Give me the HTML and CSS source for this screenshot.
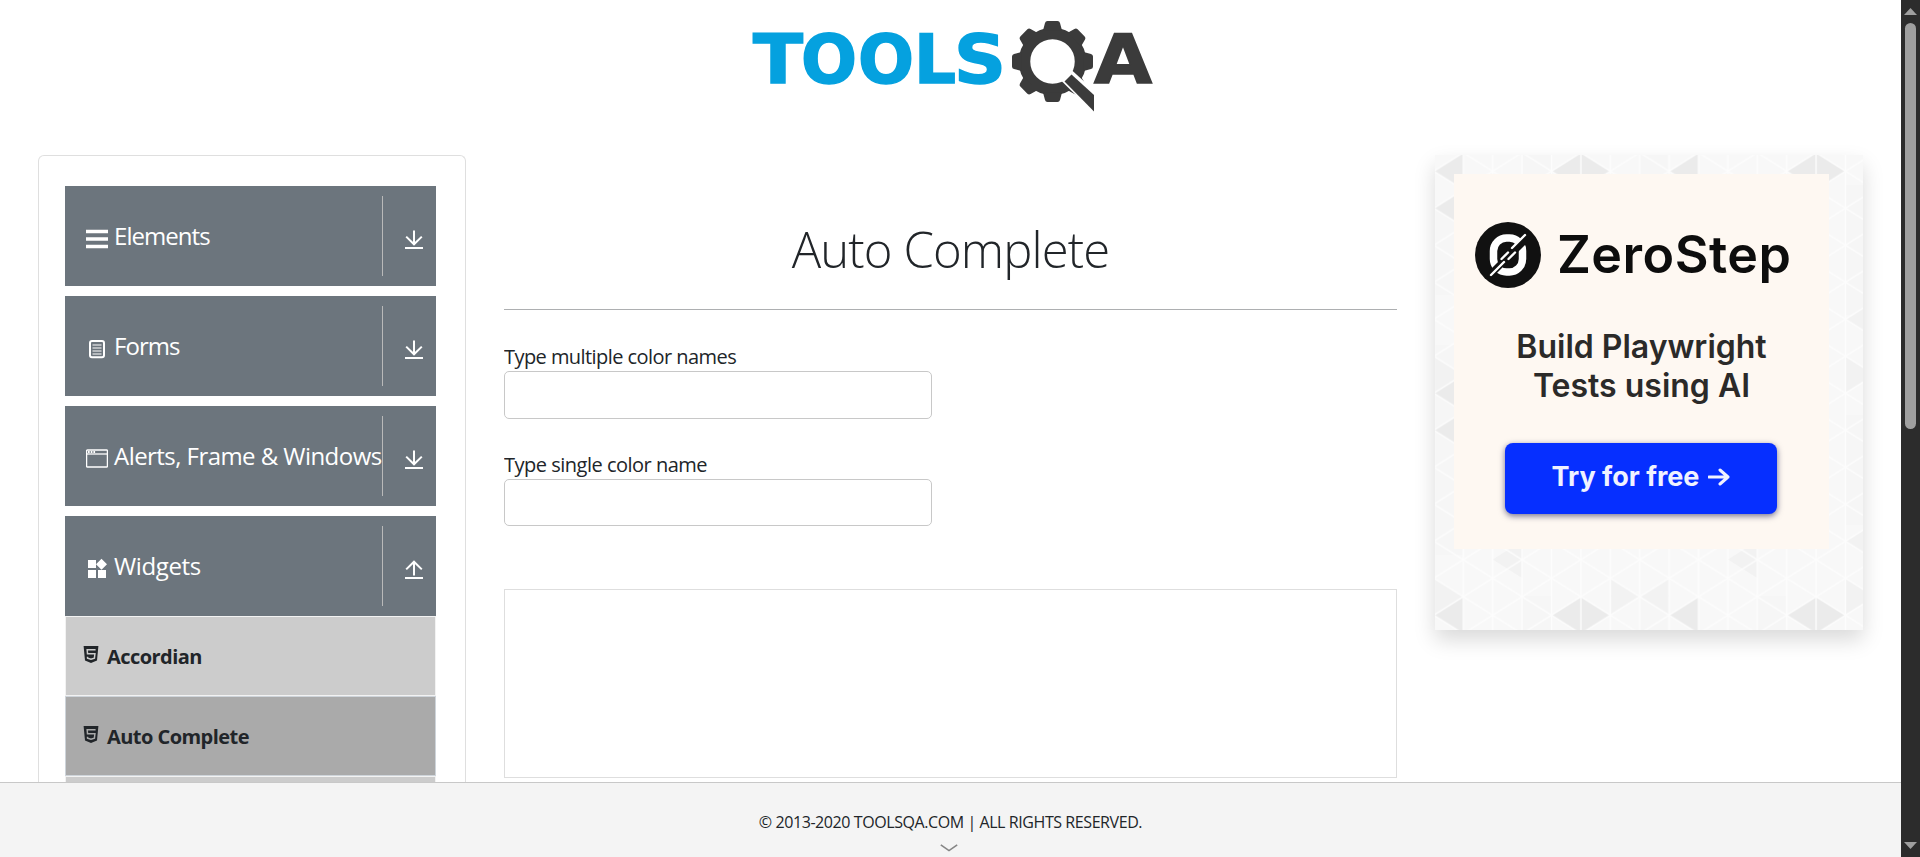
FILE: index.html
```html
<!DOCTYPE html>
<html lang="en">
<head>
<meta charset="utf-8">
<title>ToolsQA - Auto Complete</title>
<link rel="stylesheet" href="styles.css">
</head>
<body>
<svg class="defs" width="0" height="0">
  <symbol id="down" viewBox="0 0 18 20"><path d="M9 0.5V14M1.2 6.6 9 14.3 16.8 6.6" fill="none" stroke="#fff" stroke-width="2"/><path d="M0 17h18v2H0z" fill="#fff"/></symbol>
  <symbol id="up" viewBox="0 0 18 20"><path d="M9 15.5V2M1.2 9.4 9 1.7 16.8 9.4" fill="none" stroke="#fff" stroke-width="2"/><path d="M0 17h18v2H0z" fill="#fff"/></symbol>
  <symbol id="html5" viewBox="0 0 16 18"><path d="M.6 0h14.8L14 14.6 8 17 2 14.6z" fill="#212529"/><path d="M12.6 3.800H4.200L4.500 7.800h7.400l-.5 4.300L8 13.300l-3.400-1.200-.1-1.400" fill="none" stroke="currentColor" stroke-width="1.500"/></symbol>
</svg>
<div class="window">
  <div class="page">
    <header class="header">
      <svg class="logo" width="402" height="94" viewBox="0 0 402 94">
        <g class="logo-blue">
          <text x="1" y="65.500" textLength="50" lengthAdjust="spacingAndGlyphs">T</text>
          <text x="49" y="65.500" textLength="56" lengthAdjust="spacingAndGlyphs">O</text>
          <text x="106" y="65.500" textLength="56" lengthAdjust="spacingAndGlyphs">O</text>
          <text x="162" y="65.500" textLength="42" lengthAdjust="spacingAndGlyphs">L</text>
          <text x="202" y="65.500" textLength="52" lengthAdjust="spacingAndGlyphs">S</text>
        </g>
        <g transform="translate(300.5 44.500)" fill="#3b3b3b">
          <circle r="28" fill="none" stroke="#3b3b3b" stroke-width="11.5"/>
          <path id="tooth" d="M-9.5-31-7.500-38.500Q-7-40.500-5-40.500H5Q7-40.500 7.500-38.500L9.500-31z"/>
          <use href="#tooth" transform="rotate(45)"/><use href="#tooth" transform="rotate(90)"/><use href="#tooth" transform="rotate(135)"/>
          <use href="#tooth" transform="rotate(180)"/><use href="#tooth" transform="rotate(225)"/><use href="#tooth" transform="rotate(270)"/><use href="#tooth" transform="rotate(315)"/>
          <path d="M8 18.500 18.500 8 46 33V56z" fill="#fff"/>
          <path d="M12 20 19 13 41.500 33.500V50z"/>
        </g>
        <text class="logo-a" x="342" y="65.500" textLength="58" lengthAdjust="spacingAndGlyphs">A</text>
      </svg>
    </header>
    <div class="columns">
      <nav class="sidebar">
        <div class="group"><div class="group-name"><svg class="icon" width="22" height="22" viewBox="0 0 22 22"><path d="M0 3.500h22M0 11h22M0 18.500h22" stroke="#fff" stroke-width="3.600"/></svg><span class="t-elements">Elements</span></div><div class="toggle"><svg width="18" height="20"><use href="#down"/></svg></div></div>
        <div class="group"><div class="group-name"><svg class="icon" width="22" height="22" viewBox="0 0 22 22"><rect x="4" y="3" width="14" height="16.300" rx="2" fill="none" stroke="#fff" stroke-width="2"/><path d="M6.500 7h9M6.500 10h9M6.500 13h9M6.500 16h9" stroke="#fff" stroke-width="1.100"/></svg><span class="t-forms">Forms</span></div><div class="toggle"><svg width="18" height="20"><use href="#down"/></svg></div></div>
        <div class="group"><div class="group-name"><svg class="icon" width="22" height="22" viewBox="0 0 22 22"><rect x=".6" y="2" width="20.800" height="17" rx=".8" fill="none" stroke="#fff" stroke-width="1.300"/><path d="M1 6h20" stroke="#fff" stroke-width="1.300"/><path d="M2 4h8" stroke="#fff" stroke-width="1.800" stroke-dasharray="1.700 1"/></svg><span class="t-alerts">Alerts, Frame &amp; Windows</span></div><div class="toggle"><svg width="18" height="20"><use href="#down"/></svg></div></div>
        <div class="group open"><div class="group-name"><svg class="icon" width="22" height="22" viewBox="0 0 22 22"><path d="M2 2h8v8H2zM2 12h8v8H2zM12 12h8v8h-8zM15.500 .8 21 6.300l-5.500 5.500L10 6.300z" fill="#fff"/></svg><span class="t-widgets">Widgets</span></div><div class="toggle"><svg width="18" height="20"><use href="#up"/></svg></div></div>
        <ul class="menu">
          <li class="item"><svg width="16" height="18"><use href="#html5"/></svg><span>Accordian</span></li>
          <li class="item active"><svg width="16" height="18"><use href="#html5"/></svg><span>Auto Complete</span></li>
          <li class="item"></li>
        </ul>
      </nav>
      <main class="content">
        <h1 class="title"><span>Auto Complete</span></h1>
        <label class="label first" for="multi"><span>Type multiple color names</span></label>
        <input class="field" id="multi">
        <label class="label second" for="single"><span>Type single color name</span></label>
        <input class="field short" id="single">
        <div class="frame"></div>
      </main>
      <aside class="promo">
        <svg class="texture" width="428" height="475" viewBox="0 0 428 475">
          <defs><pattern id="mesh" x="28.300" y="-2.300" width="58.800" height="37" patternUnits="userSpaceOnUse">
            <path d="M0 0v37M29.400 0v37M58.800 0v37M0 0l58.800 37M0 37 58.800 0" fill="none" stroke="#fdfdfd" stroke-width="1.300"/>
          </pattern></defs>
          <rect width="428" height="475" fill="#f8f8f8"/>
          <g fill="#f6f6f6">
            <path d="M0 50h28v90H0zM0 190h28v210H0zM204.700 0h29.400v34h-29.400zM87 0h29.400v34H87zM322 441h29v34h-29zM87 441h29v34H87zM204.700 441h29.400v34h-29.400zM410 30h18v130h-18zM410 260h18v110h-18z"/>
          </g>
          <g fill="#f2f2f2">
            <path d="M-1.100 423v37l29.400-18.500zM175.300 423v37l29.400-18.500zM234.100 423v37l-29.400-18.500zM410.400 423v37l29.400-18.500zM439.800 368v37l-29.400-18.500zM410.400 201v37l29.400-18.500zM439.800 146v37l-29.400-18.500zM-1.100 201v37l29.400-18.500zM87.100 386v37l-29.400-18.500zM322.300 386v37l-29.400-18.500z"/>
          </g>
          <g fill="#ebebeb">
            <path d="M28.300 441.700v37l-29.400-18.500zM145.900 441.700v37l-29.400-18.500zM145.900 441.700v37l29.400-18.500zM263.500 441.700v37l-29.400-18.500zM381.100 441.700v37l-29.400-18.500zM381.100 441.700v37l29.400-18.500zM28.300-2.300v37l-29.400-18.500zM145.900-2.300v37l-29.400-18.500zM145.900-2.300v37l29.400-18.500zM263.500-2.300v37l-29.400-18.500zM381.100-2.300v37l-29.400-18.500zM381.100-2.300v37l29.400-18.500zM28.300 34.700v37l-29.400-18.500zM28.300 219.700v37l-29.400-18.500zM28.300 256.700v37l-29.400-18.500z"/>
          </g>
          <rect width="428" height="475" fill="url(#mesh)"/>
        </svg>
        <div class="ad">
          <div class="brand">
            <svg width="66" height="68" viewBox="0 0 66 68">
              <circle cx="33" cy="34" r="33" fill="#111"/>
              <rect x="18.500" y="17" width="29" height="34" rx="13" fill="none" stroke="#fff" stroke-width="7.500"/>
              <path d="M16 53 51 18" stroke="#111" stroke-width="7"/>
              <path d="M16 54 29 41M26.500 38 33 31.500M33.500 38 40 31.500M37 27 50 14" stroke="#fff" stroke-width="2.400" stroke-linecap="round"/>
            </svg>
            <span>ZeroStep</span>
          </div>
          <div class="pitch"><span>Build Playwright</span><span>Tests using AI</span></div>
          <div class="cta"><span>Try for free</span><svg width="22" height="18" viewBox="0 0 22 18"><path d="M1 9h19M12 2l8 7-8 7" fill="none" stroke="#f0f2ff" stroke-width="3" stroke-linejoin="round" stroke-linecap="round"/></svg></div>
        </div>
      </aside>
    </div>
    <footer class="footer">
      <span class="copyright">© 2013-2020 TOOLSQA.COM | ALL RIGHTS RESERVED.</span>
      <svg class="chevron" width="18" height="8" viewBox="0 0 18 8"><path d="M.8.8 9 6.600 17.200.8" fill="none" stroke="#858585" stroke-width="1.600"/></svg>
    </footer>
  </div>
  <div class="scrollbar">
    <svg width="13" height="7" viewBox="0 0 13 7"><path d="M0 7 6.500 0 13 7z" fill="#9f9f9f"/></svg>
    <div class="thumb"></div>
    <svg width="13" height="7" viewBox="0 0 13 7"><path d="M0 0h13L6.500 7z" fill="#9f9f9f"/></svg>
  </div>
</div>
</body>
</html>
```
FILE: styles.css
```css
* { box-sizing: border-box; }
html, body { margin: 0; height: 857px; overflow: hidden; }
body { background: #fff; color: #212529; font-family: "Open Sans", "Noto Sans", sans-serif; }
span { white-space: nowrap; }
.defs { display: block; }
svg { flex: none; }
.window { display: flex; height: 857px; }
.page { display: flex; flex-direction: column; width: 1901px; height: 857px; }

.header { display: flex; justify-content: center; height: 155px; flex: none; padding: 17px 0 0 5px; }
.logo { display: block; overflow: visible; }
.logo text { font-family: "DejaVu Sans", sans-serif; font-weight: 700; font-size: 67px; stroke-width: 1.5px; stroke-linejoin: miter; }
.logo-blue { fill: #05a1df; stroke: #05a1df; }
.logo .logo-a { fill: #3b3b3b; stroke: #3b3b3b; }

.columns { display: flex; align-items: flex-start; gap: 38px; height: 627px; padding-left: 38px; flex: none; }
.sidebar { width: 428px; height: 627px; border: 1px solid #dfdfdf; border-bottom: 0; border-radius: 6px 6px 0 0; padding: 30px 29px 0 26px; overflow: hidden; }
.group { display: flex; align-items: center; height: 100px; margin-bottom: 10px; background: #6c757d; color: #fff; }
.group.open { margin-bottom: 0; }
.group-name { display: flex; align-items: center; gap: 6px; width: 318px; height: 80px; padding: 0 0 1px 21px; border-right: 1px solid #b9b9b9; font-size: 24px; line-height: 34px; }
.t-elements { letter-spacing: -.95px; }
.t-forms { letter-spacing: -.95px; }
.t-alerts { letter-spacing: -.55px; }
.t-widgets { letter-spacing: -.38px; }
.icon { position: relative; top: 3px; }
.toggle { display: flex; justify-content: center; width: 53px; padding: 7px 0 0 8px; }
.menu { list-style: none; margin: 0; padding: 0; }
.item { display: flex; align-items: center; gap: 8px; height: 80px; padding: 0 0 2px 17px; border: 1px solid #f2f2f2; background: #ccc; background-clip: padding-box; color: #ccc; font-weight: 700; font-size: 20px; }
.item.active { background: #aaa; border-color: #ced4da; color: #aaa; }
.item span { color: #212529; letter-spacing: -.55px; padding-top: 3px; }

.content { width: 893px; height: 627px; padding-top: 63px; overflow: hidden; }
.title { height: 92px; margin: 0; text-align: center; border-bottom: 1px solid #adafb1; font-weight: 300; font-size: 49px; line-height: 63px; letter-spacing: -.9px; }
.label { display: block; height: 30px; font-size: 20px; line-height: 32px; letter-spacing: -.56px; }
.first { margin-top: 31px; }
.second { margin-top: 30px; letter-spacing: -.5px; }
.field { display: block; width: 428px; height: 48px; border: 1px solid #c8c8c8; border-radius: 5px; background: #fff; }
.field.short { height: 47px; }
.frame { height: 189px; margin-top: 63px; border: 1px solid #dedede; }

.promo { display: grid; width: 428px; height: 475px; box-shadow: 0 10px 20px rgba(0, 0, 0, .15); }
.texture, .ad { grid-area: 1 / 1; }
.ad { width: 375px; height: 375px; margin: 19px 0 0 19px; padding-top: 47px; background: #fef8f2; font-family: Inter, sans-serif; display: flex; flex-direction: column; }
.brand { display: flex; align-items: center; gap: 16px; height: 68px; padding-left: 21px; color: #0d0d0d; font-weight: 600; font-size: 52px; line-height: 68px; letter-spacing: .45px; }
.pitch { display: flex; flex-direction: column; align-items: center; margin-top: 38px; color: #2b2a29; font-weight: 600; font-size: 32px; line-height: 39px; }
.cta { display: flex; align-items: center; justify-content: center; gap: 9px; width: 272px; height: 71px; margin: 38px 0 0 51px; padding-bottom: 4px; border-radius: 8px; background: #062fff; color: #f0f2ff; box-shadow: 0 2px 6px rgba(0, 0, 60, .55); font-weight: 700; font-size: 27px; }

.footer { display: flex; flex-direction: column; align-items: center; height: 75px; flex: none; border-top: 1px solid #c8c8c8; background: #f4f4f4; }
.copyright { margin-top: 27px; height: 24px; font-size: 16px; line-height: 24px; letter-spacing: -.42px; }
.chevron { margin: 10px 0 0 -4px; }

.scrollbar { display: flex; flex-direction: column; align-items: center; width: 19px; height: 857px; padding: 8px 0; background: #2c2c2c; }
.thumb { width: 11px; height: 406px; margin: 8px 0 413px; border-radius: 6px; background: #9f9f9f; }
```
